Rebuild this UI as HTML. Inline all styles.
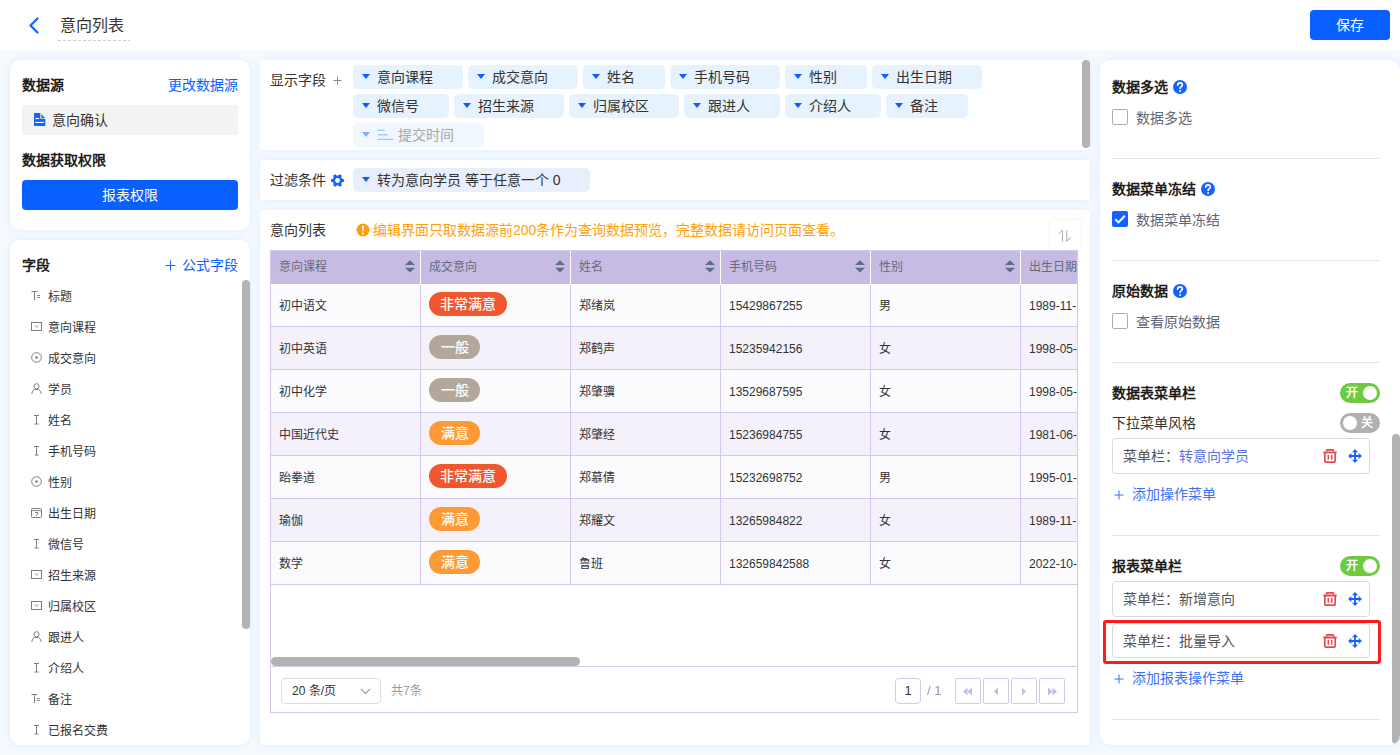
<!DOCTYPE html>
<html lang="zh-CN"><head><meta charset="utf-8">
<style>
*{box-sizing:border-box;margin:0;padding:0}
html,body{width:1400px;height:755px;overflow:hidden}
body{font-family:"Liberation Sans",sans-serif;background:#f5faff;color:#333;position:relative;font-size:14px}
.a{position:absolute;white-space:nowrap}
.hdr{position:absolute;left:0;top:0;width:1400px;height:50px;background:#fff}
.card{position:absolute;background:#fff;border-radius:10px;box-shadow:0 0 9px rgba(20,130,255,.11)}
.card.sm{border-radius:4px}
.t14{font-size:14px;line-height:20px}
.b{font-weight:bold;color:#1d1d1d}
.blue{color:#0d62ff}
.btn{position:absolute;background:#0a5fff;color:#fff;border-radius:4px;text-align:center}
.fi{position:absolute;left:31px;width:11px;height:11px}
.fl{position:absolute;left:48px;font-size:12px;line-height:16px;color:#333}
.tag{position:absolute;height:24px;background:#e6f2fe;border-radius:5px;font-size:14px;line-height:24px;color:#333;padding-left:24px}
.tag:before{content:"";position:absolute;left:9px;top:9px;border-left:4px solid transparent;border-right:4px solid transparent;border-top:5px solid #0a5fff}
</style></head><body>
<!-- header -->
<div class="hdr">
  <svg class="a" style="left:28px;top:17px" width="12" height="17" viewBox="0 0 12 17"><path d="M9.5 1.5 L2.5 8.5 L9.5 15.5" fill="none" stroke="#1463ff" stroke-width="2.2" stroke-linecap="round" stroke-linejoin="round"/></svg>
  <div class="a" style="left:60px;top:15px;font-size:16px;line-height:22px;color:#333">意向列表</div>
  <div class="a" style="left:58px;top:40px;width:72px;height:1px;background:repeating-linear-gradient(90deg,#cfcfcf 0 3px,transparent 3px 5px)"></div>
  <div class="btn" style="left:1310px;top:10px;width:80px;height:30px;line-height:30px;font-size:14px">保存</div>
</div>

<!-- left card 1 -->
<div class="card" style="left:10px;top:60px;width:240px;height:170px">
  <div class="a t14 b" style="left:12px;top:15px">数据源</div>
  <div class="a t14 blue" style="right:12px;top:15px">更改数据源</div>
  <div class="a" style="left:12px;top:45px;width:216px;height:30px;background:#f3f3f3;border-radius:3px">
    <svg class="a" style="left:11.7px;top:8px" width="12" height="13" viewBox="0 0 12 13"><path d="M0 0.5Q0 0 0.5 0H6.3V5.7H11.3V12.5Q11.3 13 10.8 13H0.5Q0 13 0 12.5Z" fill="#1463ff"/><path d="M7.4 0.9V5H10.7Z" fill="#1463ff"/><rect x="1.3" y="5" width="3.8" height="1.1" fill="#fff"/><rect x="1.3" y="8.9" width="8.5" height="1.1" fill="#fff"/></svg>
    <div class="a t14" style="left:30px;top:5px;color:#333">意向确认</div>
  </div>
  <div class="a t14 b" style="left:12px;top:90px">数据获取权限</div>
  <div class="btn" style="left:12px;top:120px;width:216px;height:30px;line-height:30px;font-size:14px">报表权限</div>
</div>

<!-- left card 2 -->
<div class="card" id="lc2" style="left:10px;top:240px;width:240px;height:505px;overflow:hidden">
  <div class="a t14 b" style="left:12px;top:15px">字段</div>
  <svg class="a" style="left:155px;top:20px" width="11" height="11" viewBox="0 0 11 11"><path d="M5.5 0.5V10.5M0.5 5.5H10.5" stroke="#1463ff" stroke-width="1"/></svg><div class="a t14 blue" style="right:12px;top:15px">公式字段</div>
  <div class="a" style="left:232px;top:40px;width:8px;height:349px;background:#b3b3b3;border-radius:4px"></div>
  <div class="a" style="left:0;top:50px;width:60px;height:12px"><svg class="fi" style="left:21px;top:0" viewBox="0 0 11 11"><path d="M0.5 1.5H6.5M3.5 1.5V10" stroke="#7d7d7d" stroke-width="1" fill="none"/><path d="M6 5.5H9M6 7.5H9" stroke="#7d7d7d" stroke-width="0.9" fill="none"/></svg></div>
  <div class="fl a" style="left:38px;top:49px">标题</div>
  <div class="a" style="left:0;top:81px;width:60px;height:12px"><svg class="fi" style="left:21px;top:0" viewBox="0 0 11 11"><rect x="0.5" y="1.5" width="10" height="8" fill="none" stroke="#7d7d7d" stroke-width="1"/><path d="M3.8 4.6L5.5 6.2L7.2 4.6" stroke="#7d7d7d" stroke-width="0.9" fill="none"/></svg></div>
  <div class="fl a" style="left:38px;top:80px">意向课程</div>
  <div class="a" style="left:0;top:112px;width:60px;height:12px"><svg class="fi" style="left:21px;top:0" viewBox="0 0 11 11"><circle cx="5.5" cy="5.5" r="4.8" fill="none" stroke="#7d7d7d" stroke-width="1"/><circle cx="5.5" cy="5.5" r="1.3" fill="#7d7d7d"/></svg></div>
  <div class="fl a" style="left:38px;top:111px">成交意向</div>
  <div class="a" style="left:0;top:143px;width:60px;height:12px"><svg class="fi" style="left:21px;top:0" viewBox="0 0 11 11"><circle cx="5.5" cy="3.3" r="2.6" fill="none" stroke="#7d7d7d" stroke-width="1"/><path d="M0.8 10.8Q1.5 6.3 5.5 6.3Q9.5 6.3 10.2 10.8" fill="none" stroke="#7d7d7d" stroke-width="1"/></svg></div>
  <div class="fl a" style="left:38px;top:142px">学员</div>
  <div class="a" style="left:0;top:174px;width:60px;height:12px"><svg class="fi" style="left:21px;top:0" viewBox="0 0 11 11"><path d="M3 1.5H8M5.5 1.5V10M3.5 10H7.5" stroke="#7d7d7d" stroke-width="1" fill="none"/></svg></div>
  <div class="fl a" style="left:38px;top:173px">姓名</div>
  <div class="a" style="left:0;top:205px;width:60px;height:12px"><svg class="fi" style="left:21px;top:0" viewBox="0 0 11 11"><path d="M3 1.5H8M5.5 1.5V10M3.5 10H7.5" stroke="#7d7d7d" stroke-width="1" fill="none"/></svg></div>
  <div class="fl a" style="left:38px;top:204px">手机号码</div>
  <div class="a" style="left:0;top:236px;width:60px;height:12px"><svg class="fi" style="left:21px;top:0" viewBox="0 0 11 11"><circle cx="5.5" cy="5.5" r="4.8" fill="none" stroke="#7d7d7d" stroke-width="1"/><circle cx="5.5" cy="5.5" r="1.3" fill="#7d7d7d"/></svg></div>
  <div class="fl a" style="left:38px;top:235px">性别</div>
  <div class="a" style="left:0;top:267px;width:60px;height:12px"><svg class="fi" style="left:21px;top:0" viewBox="0 0 11 11"><rect x="0.5" y="1.5" width="10" height="9" rx="1" fill="none" stroke="#7d7d7d" stroke-width="1"/><path d="M0.5 3.6H10.5" stroke="#7d7d7d" stroke-width="1"/><path d="M4 5.5H7L5.2 9" stroke="#7d7d7d" stroke-width="0.9" fill="none"/></svg></div>
  <div class="fl a" style="left:38px;top:266px">出生日期</div>
  <div class="a" style="left:0;top:298px;width:60px;height:12px"><svg class="fi" style="left:21px;top:0" viewBox="0 0 11 11"><path d="M3 1.5H8M5.5 1.5V10M3.5 10H7.5" stroke="#7d7d7d" stroke-width="1" fill="none"/></svg></div>
  <div class="fl a" style="left:38px;top:297px">微信号</div>
  <div class="a" style="left:0;top:329px;width:60px;height:12px"><svg class="fi" style="left:21px;top:0" viewBox="0 0 11 11"><rect x="0.5" y="1.5" width="10" height="8" fill="none" stroke="#7d7d7d" stroke-width="1"/><path d="M3.8 4.6L5.5 6.2L7.2 4.6" stroke="#7d7d7d" stroke-width="0.9" fill="none"/></svg></div>
  <div class="fl a" style="left:38px;top:328px">招生来源</div>
  <div class="a" style="left:0;top:360px;width:60px;height:12px"><svg class="fi" style="left:21px;top:0" viewBox="0 0 11 11"><rect x="0.5" y="1.5" width="10" height="8" fill="none" stroke="#7d7d7d" stroke-width="1"/><path d="M3.8 4.6L5.5 6.2L7.2 4.6" stroke="#7d7d7d" stroke-width="0.9" fill="none"/></svg></div>
  <div class="fl a" style="left:38px;top:359px">归属校区</div>
  <div class="a" style="left:0;top:391px;width:60px;height:12px"><svg class="fi" style="left:21px;top:0" viewBox="0 0 11 11"><circle cx="5.5" cy="3.3" r="2.6" fill="none" stroke="#7d7d7d" stroke-width="1"/><path d="M0.8 10.8Q1.5 6.3 5.5 6.3Q9.5 6.3 10.2 10.8" fill="none" stroke="#7d7d7d" stroke-width="1"/></svg></div>
  <div class="fl a" style="left:38px;top:390px">跟进人</div>
  <div class="a" style="left:0;top:422px;width:60px;height:12px"><svg class="fi" style="left:21px;top:0" viewBox="0 0 11 11"><path d="M3 1.5H8M5.5 1.5V10M3.5 10H7.5" stroke="#7d7d7d" stroke-width="1" fill="none"/></svg></div>
  <div class="fl a" style="left:38px;top:421px">介绍人</div>
  <div class="a" style="left:0;top:453px;width:60px;height:12px"><svg class="fi" style="left:21px;top:0" viewBox="0 0 11 11"><path d="M0.5 1.5H6.5M3.5 1.5V10" stroke="#7d7d7d" stroke-width="1" fill="none"/><path d="M6 5.5H9M6 7.5H9" stroke="#7d7d7d" stroke-width="0.9" fill="none"/></svg></div>
  <div class="fl a" style="left:38px;top:452px">备注</div>
  <div class="a" style="left:0;top:484px;width:60px;height:12px"><svg class="fi" style="left:21px;top:0" viewBox="0 0 11 11"><path d="M3 1.5H8M5.5 1.5V10M3.5 10H7.5" stroke="#7d7d7d" stroke-width="1" fill="none"/></svg></div>
  <div class="fl a" style="left:38px;top:483px">已报名交费</div>
</div>

<!-- middle card 1: display fields -->
<div class="card sm" style="left:260px;top:60px;width:830px;height:90px">
  <div class="a t14" style="left:10px;top:10px;color:#333">显示字段</div>
  <svg class="a" style="left:73px;top:16px" width="9" height="9" viewBox="0 0 9 9"><path d="M4.5 0.5V8.5M0.5 4.5H8.5" stroke="#8c8c8c" stroke-width="1"/></svg>
  <div class="a" style="left:822px;top:0;width:8px;height:88px;background:#b3b3b3;border-radius:4px"></div>
  <div class="tag" style="left:93px;top:5px;width:110px">意向课程</div>
  <div class="tag" style="left:208px;top:5px;width:110px">成交意向</div>
  <div class="tag" style="left:323px;top:5px;width:82px">姓名</div>
  <div class="tag" style="left:410px;top:5px;width:110px">手机号码</div>
  <div class="tag" style="left:525px;top:5px;width:82px">性别</div>
  <div class="tag" style="left:612px;top:5px;width:110px">出生日期</div>
  <div class="tag" style="left:93px;top:34px;width:96px">微信号</div>
  <div class="tag" style="left:194px;top:34px;width:110px">招生来源</div>
  <div class="tag" style="left:309px;top:34px;width:110px">归属校区</div>
  <div class="tag" style="left:424px;top:34px;width:96px">跟进人</div>
  <div class="tag" style="left:525px;top:34px;width:96px">介绍人</div>
  <div class="tag" style="left:626px;top:34px;width:82px">备注</div>
  <style>.tag.lt:before{border-top-color:#82b0ff}</style><div class="tag lt" style="left:93px;top:63px;width:131px;background:#f0f7fe;color:#a6a6a6;padding-left:45px"><svg class="a" style="left:24px;top:6px" width="17" height="11" viewBox="0 0 17 11"><path d="M0.5 1.2H7.5M1 5.8H11M0.5 10.3H16.5" stroke="#8ab4ff" stroke-width="1"/></svg>提交时间</div>
</div>

<!-- middle card 2: filter -->
<div class="card sm" style="left:260px;top:160px;width:830px;height:40px">
  <div class="a t14" style="left:10px;top:10px;color:#333">过滤条件</div>
  <svg class="a" style="left:71px;top:13.5px" width="13" height="13" viewBox="0 0 13 13"><g fill="#1463ff"><rect x="0" y="4.9" width="13" height="3.2" rx="0.8" transform="rotate(0 6.5 6.5)"/><rect x="0" y="4.9" width="13" height="3.2" rx="0.8" transform="rotate(60 6.5 6.5)"/><rect x="0" y="4.9" width="13" height="3.2" rx="0.8" transform="rotate(120 6.5 6.5)"/><circle cx="6.5" cy="6.5" r="4.9"/></g><circle cx="6.5" cy="6.5" r="2.4" fill="#fff"/></svg>
  <div class="tag" style="left:93px;top:8px;width:237px;background:#e8eefc">转为意向学员 等于任意一个 0</div>
</div>

<!-- middle card 3: table -->
<div class="card sm" style="left:260px;top:210px;width:830px;height:535px">
  <div class="a t14" style="left:10px;top:10px;color:#333">意向列表</div>
  <svg class="a" style="left:96px;top:13px" width="14" height="14" viewBox="0 0 14 14"><circle cx="7" cy="7" r="6.5" fill="#ff9d0a"/><path d="M5.8 2.8H8.2L7.6 8.6H6.4Z" fill="#fff"/><circle cx="7" cy="10.5" r="1.1" fill="#fff"/></svg>
  <div class="a t14" style="left:113px;top:10px;color:#ffa00a">编辑界面只取数据源前200条作为查询数据预览，完整数据请访问页面查看。</div>
  <div class="a" style="left:790px;top:10px;width:30px;height:30px;background:#fff;box-shadow:0 0 3px rgba(0,0,0,.08)">
    <svg class="a" style="left:7px;top:8px" width="16" height="15" viewBox="0 0 16 15"><path d="M5.5 2V13.5M5.5 2L1.5 6" stroke="#ababab" stroke-width="1" fill="none"/><path d="M9.8 2V13.5M9.8 13.5L13.5 9.2" stroke="#ababab" stroke-width="1" fill="none"/></svg>
  </div>
  <div class="a" style="left:10px;top:40px;width:808px;height:463px;border:1px solid #d3c9ef;overflow:hidden">
  <div class="a" style="left:0;top:0;width:900px;height:33px;background:#c7bbe5"></div>
  <div class="a" style="left:8px;top:8px;font-size:12px;line-height:17px;color:#646b7d">意向课程</div>
  <svg class="a" style="left:134px;top:9px" width="10" height="13" viewBox="0 0 10 13"><path d="M0 5L5 0.2L10 5Z M0 7.8H10L5 12.6Z" fill="#5f6b80"/></svg>
  <div class="a" style="left:158px;top:8px;font-size:12px;line-height:17px;color:#646b7d">成交意向</div>
  <div class="a" style="left:149px;top:0;width:1px;height:33px;background:#fff"></div>
  <svg class="a" style="left:284px;top:9px" width="10" height="13" viewBox="0 0 10 13"><path d="M0 5L5 0.2L10 5Z M0 7.8H10L5 12.6Z" fill="#5f6b80"/></svg>
  <div class="a" style="left:308px;top:8px;font-size:12px;line-height:17px;color:#646b7d">姓名</div>
  <div class="a" style="left:299px;top:0;width:1px;height:33px;background:#fff"></div>
  <svg class="a" style="left:434px;top:9px" width="10" height="13" viewBox="0 0 10 13"><path d="M0 5L5 0.2L10 5Z M0 7.8H10L5 12.6Z" fill="#5f6b80"/></svg>
  <div class="a" style="left:458px;top:8px;font-size:12px;line-height:17px;color:#646b7d">手机号码</div>
  <div class="a" style="left:449px;top:0;width:1px;height:33px;background:#fff"></div>
  <svg class="a" style="left:584px;top:9px" width="10" height="13" viewBox="0 0 10 13"><path d="M0 5L5 0.2L10 5Z M0 7.8H10L5 12.6Z" fill="#5f6b80"/></svg>
  <div class="a" style="left:608px;top:8px;font-size:12px;line-height:17px;color:#646b7d">性别</div>
  <div class="a" style="left:599px;top:0;width:1px;height:33px;background:#fff"></div>
  <svg class="a" style="left:734px;top:9px" width="10" height="13" viewBox="0 0 10 13"><path d="M0 5L5 0.2L10 5Z M0 7.8H10L5 12.6Z" fill="#5f6b80"/></svg>
  <div class="a" style="left:758px;top:8px;font-size:12px;line-height:17px;color:#646b7d">出生日期</div>
  <div class="a" style="left:749px;top:0;width:1px;height:33px;background:#fff"></div>
  <div class="a" style="left:0;top:33px;width:900px;height:43px;background:#fbfbfe;border-bottom:1px solid #d3c9ef"></div>
  <div class="a" style="left:8px;top:47px;font-size:12px;line-height:17px;color:#333">初中语文</div>
  <div class="a" style="left:158px;top:41px;width:78px;height:24px;border-radius:12px;background:#f0572e;color:#fff;font-size:14px;line-height:24px;text-align:center;-webkit-text-stroke:0.2px #fff">非常满意</div>
  <div class="a" style="left:308px;top:47px;font-size:12px;line-height:17px;color:#333">郑绪岚</div>
  <div class="a" style="left:458px;top:47px;font-size:12px;line-height:17px;color:#333">15429867255</div>
  <div class="a" style="left:608px;top:47px;font-size:12px;line-height:17px;color:#333">男</div>
  <div class="a" style="left:758px;top:47px;font-size:12px;line-height:17px;color:#333">1989-11-</div>
  <div class="a" style="left:0;top:76px;width:900px;height:43px;background:#f4f1fa;border-bottom:1px solid #d3c9ef"></div>
  <div class="a" style="left:8px;top:90px;font-size:12px;line-height:17px;color:#333">初中英语</div>
  <div class="a" style="left:158px;top:84px;width:51px;height:24px;border-radius:12px;background:#b3a79b;color:#fff;font-size:14px;line-height:24px;text-align:center;-webkit-text-stroke:0.2px #fff">一般</div>
  <div class="a" style="left:308px;top:90px;font-size:12px;line-height:17px;color:#333">郑鹤声</div>
  <div class="a" style="left:458px;top:90px;font-size:12px;line-height:17px;color:#333">15235942156</div>
  <div class="a" style="left:608px;top:90px;font-size:12px;line-height:17px;color:#333">女</div>
  <div class="a" style="left:758px;top:90px;font-size:12px;line-height:17px;color:#333">1998-05-</div>
  <div class="a" style="left:0;top:119px;width:900px;height:43px;background:#fbfbfe;border-bottom:1px solid #d3c9ef"></div>
  <div class="a" style="left:8px;top:133px;font-size:12px;line-height:17px;color:#333">初中化学</div>
  <div class="a" style="left:158px;top:127px;width:51px;height:24px;border-radius:12px;background:#b3a79b;color:#fff;font-size:14px;line-height:24px;text-align:center;-webkit-text-stroke:0.2px #fff">一般</div>
  <div class="a" style="left:308px;top:133px;font-size:12px;line-height:17px;color:#333">郑肇骥</div>
  <div class="a" style="left:458px;top:133px;font-size:12px;line-height:17px;color:#333">13529687595</div>
  <div class="a" style="left:608px;top:133px;font-size:12px;line-height:17px;color:#333">女</div>
  <div class="a" style="left:758px;top:133px;font-size:12px;line-height:17px;color:#333">1998-05-</div>
  <div class="a" style="left:0;top:162px;width:900px;height:43px;background:#f4f1fa;border-bottom:1px solid #d3c9ef"></div>
  <div class="a" style="left:8px;top:176px;font-size:12px;line-height:17px;color:#333">中国近代史</div>
  <div class="a" style="left:158px;top:170px;width:51px;height:24px;border-radius:12px;background:#fd9a36;color:#fff;font-size:14px;line-height:24px;text-align:center;-webkit-text-stroke:0.2px #fff">满意</div>
  <div class="a" style="left:308px;top:176px;font-size:12px;line-height:17px;color:#333">郑肇经</div>
  <div class="a" style="left:458px;top:176px;font-size:12px;line-height:17px;color:#333">15236984755</div>
  <div class="a" style="left:608px;top:176px;font-size:12px;line-height:17px;color:#333">女</div>
  <div class="a" style="left:758px;top:176px;font-size:12px;line-height:17px;color:#333">1981-06-</div>
  <div class="a" style="left:0;top:205px;width:900px;height:43px;background:#fbfbfe;border-bottom:1px solid #d3c9ef"></div>
  <div class="a" style="left:8px;top:219px;font-size:12px;line-height:17px;color:#333">跆拳道</div>
  <div class="a" style="left:158px;top:213px;width:78px;height:24px;border-radius:12px;background:#f0572e;color:#fff;font-size:14px;line-height:24px;text-align:center;-webkit-text-stroke:0.2px #fff">非常满意</div>
  <div class="a" style="left:308px;top:219px;font-size:12px;line-height:17px;color:#333">郑慕倩</div>
  <div class="a" style="left:458px;top:219px;font-size:12px;line-height:17px;color:#333">15232698752</div>
  <div class="a" style="left:608px;top:219px;font-size:12px;line-height:17px;color:#333">男</div>
  <div class="a" style="left:758px;top:219px;font-size:12px;line-height:17px;color:#333">1995-01-</div>
  <div class="a" style="left:0;top:248px;width:900px;height:43px;background:#f4f1fa;border-bottom:1px solid #d3c9ef"></div>
  <div class="a" style="left:8px;top:262px;font-size:12px;line-height:17px;color:#333">瑜伽</div>
  <div class="a" style="left:158px;top:256px;width:51px;height:24px;border-radius:12px;background:#fd9a36;color:#fff;font-size:14px;line-height:24px;text-align:center;-webkit-text-stroke:0.2px #fff">满意</div>
  <div class="a" style="left:308px;top:262px;font-size:12px;line-height:17px;color:#333">郑耀文</div>
  <div class="a" style="left:458px;top:262px;font-size:12px;line-height:17px;color:#333">13265984822</div>
  <div class="a" style="left:608px;top:262px;font-size:12px;line-height:17px;color:#333">女</div>
  <div class="a" style="left:758px;top:262px;font-size:12px;line-height:17px;color:#333">1989-11-</div>
  <div class="a" style="left:0;top:291px;width:900px;height:43px;background:#fbfbfe;border-bottom:1px solid #d3c9ef"></div>
  <div class="a" style="left:8px;top:305px;font-size:12px;line-height:17px;color:#333">数学</div>
  <div class="a" style="left:158px;top:299px;width:51px;height:24px;border-radius:12px;background:#fd9a36;color:#fff;font-size:14px;line-height:24px;text-align:center;-webkit-text-stroke:0.2px #fff">满意</div>
  <div class="a" style="left:308px;top:305px;font-size:12px;line-height:17px;color:#333">鲁班</div>
  <div class="a" style="left:458px;top:305px;font-size:12px;line-height:17px;color:#333">132659842588</div>
  <div class="a" style="left:608px;top:305px;font-size:12px;line-height:17px;color:#333">女</div>
  <div class="a" style="left:758px;top:305px;font-size:12px;line-height:17px;color:#333">2022-10-</div>
  <div class="a" style="left:149px;top:34px;width:1px;height:300px;background:#d3c9ef"></div>
  <div class="a" style="left:299px;top:34px;width:1px;height:300px;background:#d3c9ef"></div>
  <div class="a" style="left:449px;top:34px;width:1px;height:300px;background:#d3c9ef"></div>
  <div class="a" style="left:599px;top:34px;width:1px;height:300px;background:#d3c9ef"></div>
  <div class="a" style="left:749px;top:34px;width:1px;height:300px;background:#d3c9ef"></div>
  <div class="a" style="left:0;top:406px;width:309px;height:9px;background:#b3b3b3;border-radius:4.5px"></div>
  <div class="a" style="left:0;top:415px;width:900px;height:1px;background:#d3c9ef"></div>
  <div class="a" style="left:10px;top:427px;width:100px;height:26px;border:1px solid #dcdcdc;border-radius:4px;font-size:12px;line-height:24px;color:#333;padding-left:10px">20 条/页<svg class="a" style="left:78px;top:9px" width="11" height="7" viewBox="0 0 11 7"><path d="M0.8 0.8L5.5 5.5L10.2 0.8" stroke="#999" stroke-width="1.1" fill="none"/></svg></div>
  <div class="a" style="left:120px;top:431px;font-size:12px;line-height:18px;color:#999">共7条</div>
  <div class="a" style="left:624px;top:427px;width:26px;height:26px;border:1px solid #d3c9ef;border-radius:4px;font-size:13px;line-height:24px;color:#333;text-align:center">1</div>
  <div class="a" style="left:656px;top:431px;font-size:13px;line-height:18px;color:#999">/ 1</div>
  <div class="a" style="left:684px;top:427px;width:26px;height:26px;border:1px solid #d3c9ef;border-radius:2px"><svg class="a" style="left:4px;top:4px" width="16" height="17" viewBox="0 0 16 17"><path d="M7.5 8.5L12 4.5V12.5Z M3 8.5L7.5 4.5V12.5Z" fill="#c6bbe8"/></svg></div>
  <div class="a" style="left:712px;top:427px;width:26px;height:26px;border:1px solid #d3c9ef;border-radius:2px"><svg class="a" style="left:4px;top:4px" width="16" height="17" viewBox="0 0 16 17"><path d="M5.8 8.5L10 4.8V12.2Z" fill="#c6bbe8"/></svg></div>
  <div class="a" style="left:740px;top:427px;width:26px;height:26px;border:1px solid #d3c9ef;border-radius:2px"><svg class="a" style="left:4px;top:4px" width="16" height="17" viewBox="0 0 16 17"><path d="M10.2 8.5L6 4.8V12.2Z" fill="#c6bbe8"/></svg></div>
  <div class="a" style="left:768px;top:427px;width:26px;height:26px;border:1px solid #d3c9ef;border-radius:2px"><svg class="a" style="left:4px;top:4px" width="16" height="17" viewBox="0 0 16 17"><path d="M8.5 8.5L4 4.5V12.5Z M13 8.5L8.5 4.5V12.5Z" fill="#c6bbe8"/></svg></div>
  </div>
</div>


<!-- right panel -->
<div class="card" style="left:1100px;top:60px;width:300px;height:685px;overflow:hidden">
  <div class="a t14 b" style="left:12px;top:17px">数据多选</div>
  <svg class="a" style="left:73px;top:20px" width="14" height="14" viewBox="0 0 14 14"><circle cx="7" cy="7" r="7" fill="#1463ff"/><path d="M4.7 5.3Q4.7 2.9 7 2.9Q9.3 2.9 9.3 5Q9.3 6.2 8 6.9Q7.1 7.4 7.1 8.4" stroke="#fff" stroke-width="1.6" fill="none" stroke-linecap="round"/><circle cx="7.1" cy="10.9" r="1" fill="#fff"/></svg>
  <div class="a" style="left:12px;top:49px;width:16px;height:16px;border:1px solid #a9adb8;border-radius:2px"></div>
  <div class="a t14" style="left:36px;top:48px;color:#5f6675">数据多选</div>
  <div class="a" style="left:12px;top:98px;width:268px;height:1px;background:#e4e4e4"></div>
  <div class="a t14 b" style="left:12px;top:119px">数据菜单冻结</div>
  <svg class="a" style="left:101px;top:122px" width="14" height="14" viewBox="0 0 14 14"><circle cx="7" cy="7" r="7" fill="#1463ff"/><path d="M4.7 5.3Q4.7 2.9 7 2.9Q9.3 2.9 9.3 5Q9.3 6.2 8 6.9Q7.1 7.4 7.1 8.4" stroke="#fff" stroke-width="1.6" fill="none" stroke-linecap="round"/><circle cx="7.1" cy="10.9" r="1" fill="#fff"/></svg>
  <div class="a" style="left:12px;top:151px;width:16px;height:16px;background:#1463ff;border-radius:2px"><svg class="a" style="left:0;top:0" width="16" height="16" viewBox="0 0 16 16"><path d="M3.2 8.2L6.6 11.4L12.8 4.8" stroke="#fff" stroke-width="2" fill="none"/></svg></div>
  <div class="a t14" style="left:36px;top:150px;color:#5f6675">数据菜单冻结</div>
  <div class="a" style="left:12px;top:200px;width:268px;height:1px;background:#e4e4e4"></div>
  <div class="a t14 b" style="left:12px;top:221px">原始数据</div>
  <svg class="a" style="left:73px;top:224px" width="14" height="14" viewBox="0 0 14 14"><circle cx="7" cy="7" r="7" fill="#1463ff"/><path d="M4.7 5.3Q4.7 2.9 7 2.9Q9.3 2.9 9.3 5Q9.3 6.2 8 6.9Q7.1 7.4 7.1 8.4" stroke="#fff" stroke-width="1.6" fill="none" stroke-linecap="round"/><circle cx="7.1" cy="10.9" r="1" fill="#fff"/></svg>
  <div class="a" style="left:12px;top:253px;width:16px;height:16px;border:1px solid #a9adb8;border-radius:2px"></div>
  <div class="a t14" style="left:36px;top:252px;color:#5f6675">查看原始数据</div>
  <div class="a" style="left:12px;top:302px;width:268px;height:1px;background:#e4e4e4"></div>
  <div class="a t14 b" style="left:12px;top:323px">数据表菜单栏</div>
  <div class="a" style="left:240px;top:323px;width:40px;height:20px;border-radius:10px;background:#6fca41"><div class="a" style="left:6px;top:1px;font-size:12px;line-height:18px;color:#fff;font-weight:bold">开</div><div class="a" style="left:23px;top:3px;width:14px;height:14px;border-radius:7px;background:#fff"></div></div>
  <div class="a t14" style="left:12px;top:353px;color:#333">下拉菜单风格</div>
  <div class="a" style="left:240px;top:353px;width:40px;height:20px;border-radius:10px;background:#b1b1b1"><div class="a" style="left:21px;top:1px;font-size:12px;line-height:18px;color:#fff;font-weight:bold">关</div><div class="a" style="left:3px;top:3px;width:14px;height:14px;border-radius:7px;background:#fff"></div></div>
  <div class="a" style="left:12px;top:378px;width:258px;height:36px;border:1px solid #d9d9d9;border-radius:4px"><div class="a t14" style="left:10px;top:7.0px;color:#555">菜单栏：<span style="color:#5c6fe0">转意向学员</span></div><svg class="a" style="left:210px;top:10.0px" width="14" height="14" viewBox="0 0 14 14"><path d="M3.5 2.5V1.8Q3.5 0.8 4.5 0.8H9.5Q10.5 0.8 10.5 1.8V2.5" stroke="#e6484f" stroke-width="1.7" fill="none"/><path d="M0.3 3.5H13.7" stroke="#e6484f" stroke-width="1.8"/><path d="M1.8 4V12Q1.8 13.1 2.9 13.1H11.1Q12.2 13.1 12.2 12V4" stroke="#e6484f" stroke-width="1.7" fill="none"/><path d="M5.3 6V10.8M8.7 6V10.8" stroke="#e6484f" stroke-width="1.5"/></svg><svg class="a" style="left:235px;top:10.0px" width="14" height="14" viewBox="0 0 14 14"><path d="M7 1.5V12.5M1.5 7H12.5" stroke="#1463ff" stroke-width="1.8"/><path d="M7 0L10 3.3H4Z M7 14L10 10.7H4Z M0 7L3.3 4V10Z M14 7L10.7 4V10Z" fill="#1463ff"/></svg></div>
  <div class="a t14" style="left:14px;top:424px;color:#3a72f5"><svg style="position:relative;top:1px;margin-right:8px" width="10" height="10" viewBox="0 0 10 10"><path d="M5 0.5V9.5M0.5 5H9.5" stroke="#3a72f5" stroke-width="1"/></svg>添加操作菜单</div>
  <div class="a" style="left:12px;top:475px;width:268px;height:1px;background:#e4e4e4"></div>
  <div class="a t14 b" style="left:12px;top:496px">报表菜单栏</div>
  <div class="a" style="left:240px;top:496px;width:40px;height:20px;border-radius:10px;background:#6fca41"><div class="a" style="left:6px;top:1px;font-size:12px;line-height:18px;color:#fff;font-weight:bold">开</div><div class="a" style="left:23px;top:3px;width:14px;height:14px;border-radius:7px;background:#fff"></div></div>
  <div class="a" style="left:12px;top:521px;width:258px;height:36px;border:1px solid #d9d9d9;border-radius:4px"><div class="a t14" style="left:10px;top:7.0px;color:#555">菜单栏：<span style="color:#555">新增意向</span></div><svg class="a" style="left:210px;top:10.0px" width="14" height="14" viewBox="0 0 14 14"><path d="M3.5 2.5V1.8Q3.5 0.8 4.5 0.8H9.5Q10.5 0.8 10.5 1.8V2.5" stroke="#e6484f" stroke-width="1.7" fill="none"/><path d="M0.3 3.5H13.7" stroke="#e6484f" stroke-width="1.8"/><path d="M1.8 4V12Q1.8 13.1 2.9 13.1H11.1Q12.2 13.1 12.2 12V4" stroke="#e6484f" stroke-width="1.7" fill="none"/><path d="M5.3 6V10.8M8.7 6V10.8" stroke="#e6484f" stroke-width="1.5"/></svg><svg class="a" style="left:235px;top:10.0px" width="14" height="14" viewBox="0 0 14 14"><path d="M7 1.5V12.5M1.5 7H12.5" stroke="#1463ff" stroke-width="1.8"/><path d="M7 0L10 3.3H4Z M7 14L10 10.7H4Z M0 7L3.3 4V10Z M14 7L10.7 4V10Z" fill="#1463ff"/></svg></div>
  <div class="a" style="left:12px;top:563px;width:258px;height:35px;border:1px solid #d9d9d9;border-radius:4px"><div class="a t14" style="left:10px;top:6.5px;color:#555">菜单栏：<span style="color:#555">批量导入</span></div><svg class="a" style="left:210px;top:9.5px" width="14" height="14" viewBox="0 0 14 14"><path d="M3.5 2.5V1.8Q3.5 0.8 4.5 0.8H9.5Q10.5 0.8 10.5 1.8V2.5" stroke="#e6484f" stroke-width="1.7" fill="none"/><path d="M0.3 3.5H13.7" stroke="#e6484f" stroke-width="1.8"/><path d="M1.8 4V12Q1.8 13.1 2.9 13.1H11.1Q12.2 13.1 12.2 12V4" stroke="#e6484f" stroke-width="1.7" fill="none"/><path d="M5.3 6V10.8M8.7 6V10.8" stroke="#e6484f" stroke-width="1.5"/></svg><svg class="a" style="left:235px;top:9.5px" width="14" height="14" viewBox="0 0 14 14"><path d="M7 1.5V12.5M1.5 7H12.5" stroke="#1463ff" stroke-width="1.8"/><path d="M7 0L10 3.3H4Z M7 14L10 10.7H4Z M0 7L3.3 4V10Z M14 7L10.7 4V10Z" fill="#1463ff"/></svg></div>
  <div class="a" style="left:3px;top:560px;width:278px;height:44px;border:3px solid #fb1c1c;border-radius:3px"></div>
  <div class="a t14" style="left:14px;top:608px;color:#3a72f5"><svg style="position:relative;top:1px;margin-right:8px" width="10" height="10" viewBox="0 0 10 10"><path d="M5 0.5V9.5M0.5 5H9.5" stroke="#3a72f5" stroke-width="1"/></svg>添加报表操作菜单</div>
  <div class="a" style="left:12px;top:659px;width:268px;height:1px;background:#e4e4e4"></div>
  <div class="a" style="left:292px;top:374px;width:8px;height:310px;background:#b3b3b3;border-radius:4px"></div>
</div>

</body></html>
